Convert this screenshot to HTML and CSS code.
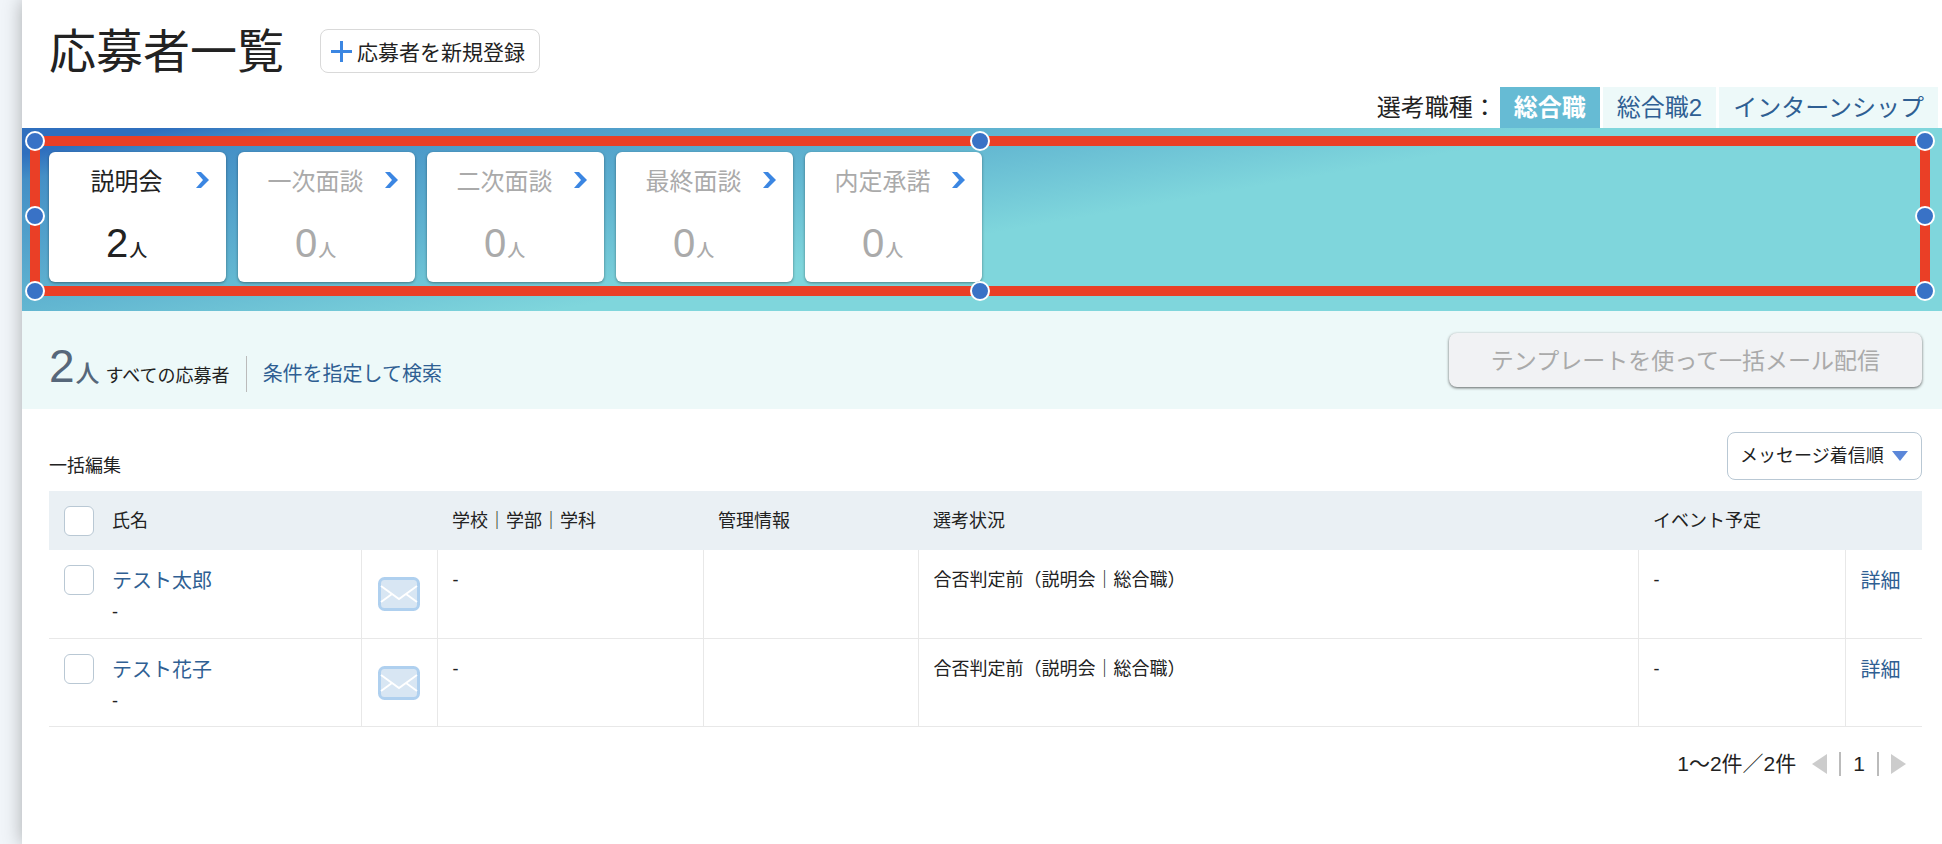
FILE: index.html
```html
<!DOCTYPE html>
<html lang="ja">
<head>
    <meta charset="UTF-8">
    <title>応募者一覧</title>
    <link rel="stylesheet" href="styles.css">
</head>
<body>
    <main class="page">
        <header class="header">
            <h1>応募者一覧</h1>
            <button type="button" class="add-button">
                <svg width="21" height="21" viewBox="0 0 21 21"><path d="M10.5 0v21M0 10.5h21" stroke="#3b86e2" stroke-width="3"/></svg>
                応募者を新規登録
            </button>
            <nav class="tabs">
                <span class="tabs-label">選考職種：</span>
                <a href="#" class="tab active">総合職</a>
                <a href="#" class="tab">総合職2</a>
                <a href="#" class="tab">インターンシップ</a>
            </nav>
        </header>

        <section class="steps">
            <a href="#" class="step current">
                <span class="step-name">説明会</span>
                <span class="step-count">2<small>人</small></span>
                <svg class="chevron" width="13" height="16" viewBox="0 0 13 16"><path d="M0 0h5l8 8-8 8H0l7-8z" fill="#3b86e2"/></svg>
            </a>
            <a href="#" class="step">
                <span class="step-name">一次面談</span>
                <span class="step-count">0<small>人</small></span>
                <svg class="chevron" width="13" height="16" viewBox="0 0 13 16"><path d="M0 0h5l8 8-8 8H0l7-8z" fill="#3b86e2"/></svg>
            </a>
            <a href="#" class="step">
                <span class="step-name">二次面談</span>
                <span class="step-count">0<small>人</small></span>
                <svg class="chevron" width="13" height="16" viewBox="0 0 13 16"><path d="M0 0h5l8 8-8 8H0l7-8z" fill="#3b86e2"/></svg>
            </a>
            <a href="#" class="step">
                <span class="step-name">最終面談</span>
                <span class="step-count">0<small>人</small></span>
                <svg class="chevron" width="13" height="16" viewBox="0 0 13 16"><path d="M0 0h5l8 8-8 8H0l7-8z" fill="#3b86e2"/></svg>
            </a>
            <a href="#" class="step">
                <span class="step-name">内定承諾</span>
                <span class="step-count">0<small>人</small></span>
                <svg class="chevron" width="13" height="16" viewBox="0 0 13 16"><path d="M0 0h5l8 8-8 8H0l7-8z" fill="#3b86e2"/></svg>
            </a>
            <!-- selection frame with its handles -->
            <div class="frame">
                <i class="handle top left"></i>
                <i class="handle top center"></i>
                <i class="handle top right"></i>
                <i class="handle middle left"></i>
                <i class="handle middle right"></i>
                <i class="handle bottom left"></i>
                <i class="handle bottom center"></i>
                <i class="handle bottom right"></i>
            </div>
        </section>

        <section class="summary">
            <p class="total"><span class="total-number">2</span><span class="total-unit">人</span>すべての応募者</p>
            <a href="#" class="search-link">条件を指定して検索</a>
            <button type="button" class="mail-button" disabled>テンプレートを使って一括メール配信</button>
        </section>

        <section class="list">
            <div class="list-tools">
                <span>一括編集</span>
                <div class="sort">
                    <select aria-label="並び順">
                        <option>メッセージ着信順</option>
                    </select>
                </div>
            </div>
            <table>
                <colgroup>
                    <col class="col-name">
                    <col class="col-mail">
                    <col class="col-school">
                    <col class="col-info">
                    <col>
                    <col class="col-event">
                    <col class="col-detail">
                </colgroup>
                <thead>
                    <tr>
                        <th>
                            <div class="name-cell">
                                <input type="checkbox" id="check-all">
                                <label for="check-all">氏名</label>
                            </div>
                        </th>
                        <th></th>
                        <th>学校｜学部｜学科</th>
                        <th>管理情報</th>
                        <th>選考状況</th>
                        <th>イベント予定</th>
                        <th></th>
                    </tr>
                </thead>
                <tbody>
                    <tr>
                        <td>
                            <div class="name-cell">
                                <input type="checkbox" aria-label="テスト太郎">
                                <div><a href="#">テスト太郎</a><br>-</div>
                            </div>
                        </td>
                        <td class="mail">
                            <svg width="42" height="34" viewBox="0 0 42 34"><rect x="1.500" y="1.500" width="39" height="31" rx="5" fill="#d8e6f3" stroke="#afd0ef" stroke-width="3"/><path d="M3 9l18 13L39 9M3 25l11-8M39 25l-11-8" fill="none" stroke="#fff" stroke-width="2"/></svg>
                        </td>
                        <td>-</td>
                        <td></td>
                        <td>合否判定前（説明会｜総合職）</td>
                        <td>-</td>
                        <td><a href="#">詳細</a></td>
                    </tr>
                    <tr>
                        <td>
                            <div class="name-cell">
                                <input type="checkbox" aria-label="テスト花子">
                                <div><a href="#">テスト花子</a><br>-</div>
                            </div>
                        </td>
                        <td class="mail">
                            <svg width="42" height="34" viewBox="0 0 42 34"><rect x="1.500" y="1.500" width="39" height="31" rx="5" fill="#d8e6f3" stroke="#afd0ef" stroke-width="3"/><path d="M3 9l18 13L39 9M3 25l11-8M39 25l-11-8" fill="none" stroke="#fff" stroke-width="2"/></svg>
                        </td>
                        <td>-</td>
                        <td></td>
                        <td>合否判定前（説明会｜総合職）</td>
                        <td>-</td>
                        <td><a href="#">詳細</a></td>
                    </tr>
                </tbody>
            </table>
            <div class="pager">
                <span>1〜2件／2件</span>
                <button type="button" aria-label="前へ"><svg width="15" height="20" viewBox="0 0 15 20"><path d="M15 0v20L0 10z" fill="#ccc"/></svg></button>
                <span class="page-number">1</span>
                <button type="button" aria-label="次へ"><svg width="15" height="20" viewBox="0 0 15 20"><path d="M0 0v20l15-10z" fill="#ccc"/></svg></button>
            </div>
        </section>
    </main>
</body>
</html>
```
FILE: styles.css
```css
* {
    box-sizing: border-box;
}
body {
    margin: 0;
    background-color: #f1f5f9;
    color: #222;
    font-family: "Liberation Sans", "Noto Sans CJK JP", sans-serif;
    font-size: 18px;
    line-height: 30px;
}
a {
    color: #2f5f93;
    text-decoration: none;
}
button, select {
    font-family: inherit;
    color: #222;
}
.page {
    min-height: 100vh;
    margin-left: 22px;
    background-color: white;
    box-shadow: 0 0 18px rgba(0, 0, 0, 0.3);
}

/* header */
.header {
    display: flex;
    align-items: flex-start;
    height: 128px;
    padding: 0 4px 0 27px;
}
h1 {
    margin: 22px 36px 0 0;
    font-size: 47px;
    font-weight: normal;
    line-height: 60px;
}
.add-button {
    display: flex;
    align-items: center;
    gap: 5px;
    height: 44px;
    margin-top: 29px;
    padding: 0 14px 0 10px;
    background-color: white;
    border: 1px solid #d9d9d9;
    border-radius: 8px;
    font-size: 21px;
}
.tabs {
    display: flex;
    align-self: flex-end;
    gap: 3px;
    margin-left: auto;
    font-size: 24px;
    line-height: 41px;
}
.tab {
    padding: 0 14px;
    background-color: #edf9f9;
}
.tab.active {
    background-color: #66bbd4;
    color: white;
    font-weight: bold;
}

/* selection steps */
.steps {
    position: relative;
    display: flex;
    gap: 12px;
    padding: 24px 27px 29px;
    background: linear-gradient(170deg, #2f6fbe 5%, #448fc6 10%, #62b6d1 35%, #7fd6dc 53%);
}
.step {
    position: relative;
    display: flex;
    flex-direction: column;
    width: 177px;
    height: 130px;
    padding: 12px 22px 0 0;
    background-color: white;
    border-radius: 6px;
    box-shadow: 0 1px 3px rgba(0, 0, 0, 0.4);
    color: #aaa;
    text-align: center;
}
.step.current {
    color: #222;
}
.step-name {
    font-size: 24px;
    line-height: 36px;
}
.step-count {
    margin-top: 18px;
    font-size: 40px;
    line-height: 50px;
}
.step-count small {
    margin-left: 1px;
    font-size: 18px;
    font-weight: 500;
}
.chevron {
    position: absolute;
    top: 20px;
    right: 17px;
}
.frame {
    position: absolute;
    top: 8px;
    right: 12px;
    bottom: 15px;
    left: 8px;
    border: 10px solid #ea3f26;
    pointer-events: none;
}
.handle {
    position: absolute;
    width: 20px;
    height: 20px;
    background-color: #3972c6;
    border: 2px solid white;
    border-radius: 50%;
}
.handle.top {
    top: -15px;
}
.handle.middle {
    top: calc(50% - 10px);
}
.handle.bottom {
    bottom: -15px;
}
.handle.left {
    left: -15px;
}
.handle.center {
    left: calc(50% - 10px);
}
.handle.right {
    right: -15px;
}

/* summary bar */
.summary {
    display: flex;
    align-items: flex-start;
    height: 98px;
    padding: 0 20px 0 27px;
    background-color: #edf9f9;
}
.total {
    margin: 25px 16px 0 0;
    line-height: 60px;
}
.total-number {
    color: #56677a;
    font-size: 46px;
}
.total-unit {
    margin: 0 6px 0 1px;
    color: #56677a;
    font-size: 24px;
    font-weight: 500;
}
.search-link {
    margin-top: 45px;
    padding-left: 16px;
    border-left: 1px solid #bbb;
    font-size: 20px;
    line-height: 36px;
}
.mail-button {
    height: 54px;
    margin: 22px 0 0 auto;
    padding: 0 42px 2px;
    background-color: #f1f2f4;
    border: none;
    border-radius: 8px;
    box-shadow: 0 1px 3px rgba(0, 0, 0, 0.6);
    color: #aaa;
    font-size: 23px;
}

/* list */
.list {
    padding: 23px 20px 0 27px;
}
.list-tools {
    display: flex;
    justify-content: space-between;
    align-items: flex-end;
    margin-bottom: 11px;
    line-height: 28px;
}
.sort {
    position: relative;
}
.sort select {
    display: block;
    width: 195px;
    height: 48px;
    padding: 0 12px;
    background-color: white;
    border: 1px solid #b9c8d4;
    border-radius: 8px;
    font-size: 18px;
    appearance: none;
}
.sort::after {
    content: "";
    position: absolute;
    top: 19px;
    right: 14px;
    border: 8px solid transparent;
    border-top: 10px solid #5b87d9;
    border-bottom: 0;
    pointer-events: none;
}
table {
    width: 100%;
    table-layout: fixed;
    border-collapse: collapse;
}
.col-name {
    width: 312px;
}
.col-mail {
    width: 76px;
}
.col-school {
    width: 266px;
}
.col-info {
    width: 215px;
}
.col-event {
    width: 207px;
}
.col-detail {
    width: 77px;
}
th, td {
    padding: 15px 15px 10px;
    text-align: left;
    vertical-align: top;
}
th {
    padding-bottom: 14px;
    background-color: #eaf0f4;
    font-weight: normal;
}
td {
    height: 88px;
    border-bottom: 1px solid #e8e8e8;
    border-left: 1px solid #e8e8e8;
}
td:first-child {
    border-left: none;
}
td a {
    font-size: 20px;
    line-height: 32px;
}
td.mail {
    padding: 27px 0 0 16px;
}
.mail svg {
    display: block;
}
.name-cell {
    display: flex;
    gap: 18px;
}
.name-cell input {
    appearance: none;
    width: 30px;
    height: 30px;
    margin: 0;
    background-color: white;
    border: 1px solid #b9c8d4;
    border-radius: 6px;
}
.pager {
    display: flex;
    justify-content: flex-end;
    align-items: center;
    gap: 12px;
    margin-top: 22px;
    padding-right: 16px;
    font-size: 21px;
}
.pager > span:first-child {
    margin-right: 4px;
}
.pager button {
    display: flex;
    padding: 0;
    background: none;
    border: none;
}
.page-number {
    padding: 0 12px;
    border-right: 2px solid #bbb;
    border-left: 2px solid #bbb;
    line-height: 24px;
}
```
